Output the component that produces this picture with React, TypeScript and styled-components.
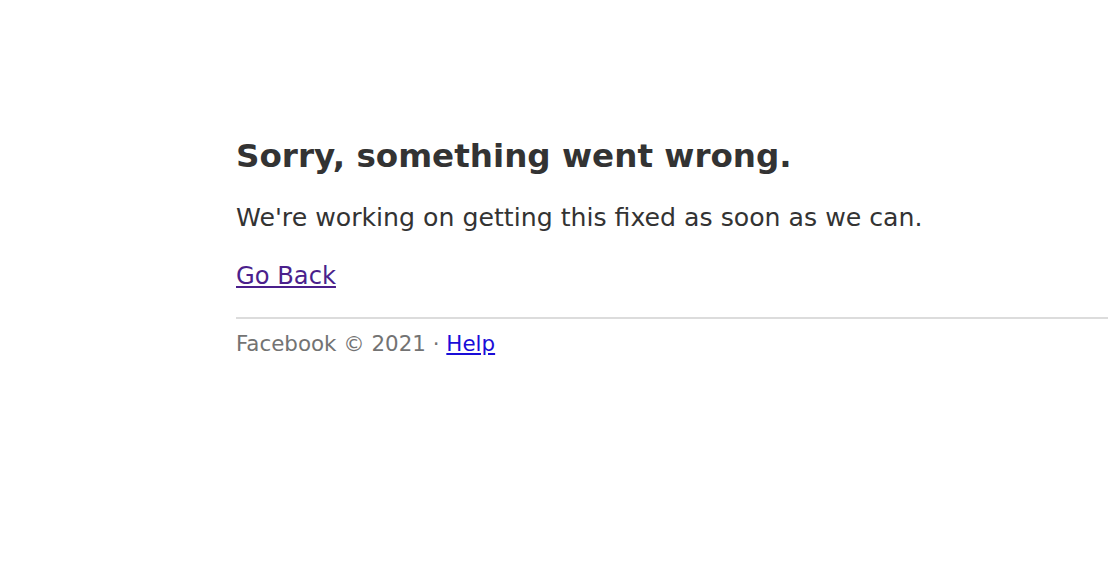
import React from 'react';
import styled, { createGlobalStyle } from 'styled-components';

const GlobalStyle = createGlobalStyle`
  html, body {
    margin: 0;
    padding: 0;
    background: #fff;
  }
  body {
    font-family: "DejaVu Sans", "Liberation Sans", sans-serif;
  }
`;

const Page = styled.div`
  padding: 134px 0 0 236px;
`;

const Title = styled.h1`
  margin: 0;
  font-size: 32.6px;
  line-height: 44px;
  font-weight: bold;
  color: #333;
`;

const Message = styled.p`
  margin: 24px 0 0;
  font-size: 25.2px;
  line-height: 32px;
  color: #333;
`;

const BackLink = styled.a`
  display: block;
  width: fit-content;
  margin-top: 26px;
  font-size: 24.2px;
  line-height: 32px;
  color: #4b1f8c;
  text-decoration: underline;
`;

const Footer = styled.div`
  margin-top: 25px;
  border-top: 2px solid #dcdcdc;
  padding-top: 11px;
  font-size: 21.4px;
  line-height: 28px;
  color: #737373;
`;

const HelpLink = styled.a`
  color: #1a0dd8;
  text-decoration: underline;
`;

export default function App() {
  return (
    <>
      <GlobalStyle />
      <Page>
        <Title>Sorry, something went wrong.</Title>
        <Message>We're working on getting this fixed as soon as we can.</Message>
        <BackLink href="#">Go Back</BackLink>
        <Footer>
          Facebook © 2021 · <HelpLink href="#">Help</HelpLink>
        </Footer>
      </Page>
    </>
  );
}
